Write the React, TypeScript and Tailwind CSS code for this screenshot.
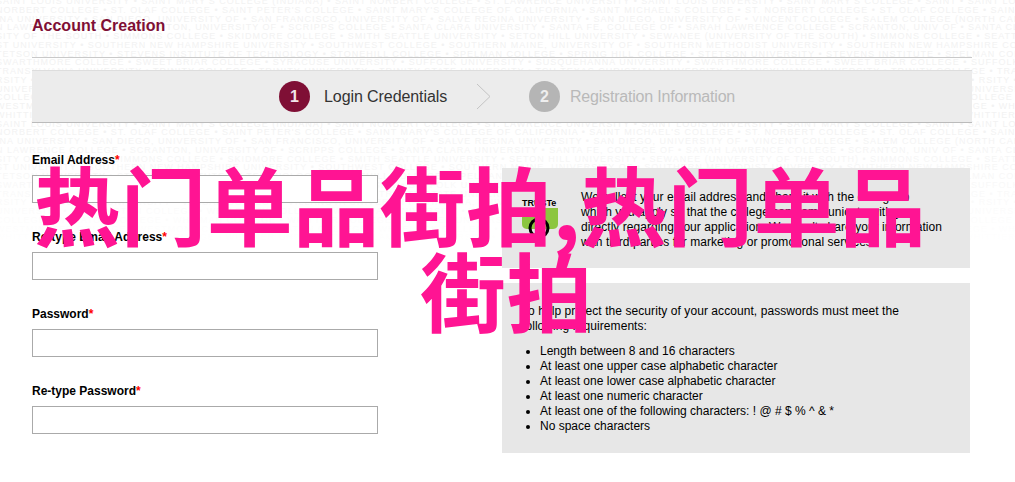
const schoolLines = [
  "SAINT LOUIS UNIVERSITY • SAINT MARY'S COLLEGE (INDIANA) • SAINT NORBERT COLLEGE • ST. LAWRENCE UNIVERSITY • SAINT LOUIS UNIVERSITY • SAINT MARY'S COLLEGE • SAINT",
  "NORBERT COLLEGE • ST. OLAF COLLEGE • SAINT PETER'S COLLEGE • SAINT MARY'S COLLEGE OF CALIFORNIA • SAINT MICHAEL'S COLLEGE • ST. NORBERT COLLEGE • ST. OLAF COLLEGE • SAINT MICHAEL'S",
  "INA UNIVERSITY • SAN DIEGO, UNIVERSITY OF • SAN FRANCISCO, UNIVERSITY OF • SALVE REGINA UNIVERSITY • SAN DIEGO, UNIVERSITY OF • VINCENT COLLEGE • SALEM COLLEGE (NORTH CAROLINA)",
  "N LAWRENCE COLLEGE • SCRANTON, UNIVERSITY OF • SCRIPPS COLLEGE • SANTA CLARA UNIVERSITY • SANTA FE, COLLEGE OF • SARAH LAWRENCE COLLEGE • SCRANTON, UNIV OF • SANTA CLARA",
  "SITY OF THE SOUTH • SIMMONS COLLEGE • SKIDMORE COLLEGE • SMITH SEATTLE UNIVERSITY • SETON HILL UNIVERSITY • SEWANEE (UNIVERSITY OF THE SOUTH) • SIMMONS COLLEGE • SEATTLE",
  "ST UNIVERSITY • SOUTHERN NEW HAMPSHIRE UNIVERSITY • SOUTHWEST COLLEGE • SOUTHERN MAINE, UNIVERSITY OF • SOUTHERN METHODIST UNIVERSITY • SOUTHERN NEW HAMPSHIRE COLLEGE",
  "TETSON UNIVERSITY • STEVENS INSTITUTE OF TECHNOLOGY • STONEHILL COLLEGE • SPELMAN COLLEGE • SPRING HILL COLLEGE • STETSON UNIVERSITY • STEVENS INSTITUTE • SPELMAN COLLEGE",
  "SWARTHMORE COLLEGE • SWEET BRIAR COLLEGE • SYRACUSE UNIVERSITY • SUFFOLK UNIVERSITY • SUSQUEHANNA UNIVERSITY • SWARTHMORE COLLEGE • SWEET BRIAR COLLEGE • SUFFOLK UNIVERSITY",
  "TRANSYLVANIA UNIVERSITY • TRINITY COLLEGE • TRINITY UNIVERSITY • TRINITY STATE UNIVERSITY • TCU TEXAS CHRISTIAN UNIVERSITY • TRANSYLVANIA UNIVERSITY • TRINITY COLLEGE",
  "RSITY • VANDERBILT UNIVERSITY • VASSAR COLLEGE • VILLANOVA UNIVERSITY • VIRGINIA, UNIVERSITY OF • WABASH COLLEGE • WAKE FOREST UNIVERSITY • VANDERBILT UNIVERSITY",
  "UNIVERSITY • WASHINGTON COLLEGE • WELLESLEY COLLEGE • WESLEYAN UNIVERSITY • WEST VIRGINIA UNIVERSITY • WESTERN NEW ENGLAND COLLEGE • WESTMINSTER COLLEGE",
  "COLLEGE • WHEATON COLLEGE • WHITMAN COLLEGE • WHITTIER COLLEGE • WIDENER UNIVERSITY • WILLAMETTE UNIVERSITY • WILLIAMS COLLEGE • WOFFORD COLLEGE • WHITMAN COLLEGE",
  "WESTMINSTER COLLEGE • WESTMONT COLLEGE • WHEATON COLLEGE • WHEELOCK COLLEGE • WHITMAN COLLEGE • WESTMONT COLLEGE • WESTMINSTER COLLEGE • WHEATON COLLEGE • WHEELOCK",
  "WHITTIER COLLEGE • WHITMAN COLLEGE • WIDENER UNIVERSITY • WILLAMETTE UNIVERSITY • WASHINGTON AND JEFFERSON COLLEGE • WHEELOCK COLLEGE • WHITMAN COLLEGE • WHITTIER COLLEGE",
];

const fields = ["Email Address", "Re-type Email Address", "Password", "Re-type Password"];

const rules = [
  "Length between 8 and 16 characters",
  "At least one upper case alphabetic character",
  "At least one lower case alphabetic character",
  "At least one numeric character",
  "At least one of the following characters: ! @ # $ % ^ & *",
  "No space characters",
];

function SchoolPattern() {
  const lines = [...schoolLines, ...schoolLines.slice(0, 14)];
  return (
    <div className="pointer-events-none absolute inset-x-0 top-0 h-[245px] overflow-hidden">
      <div className="-ml-1 -mt-[3px] text-[9px] leading-[8.75px] tracking-[1px] text-[#f2f2f2]">
        {lines.map((line, i) => (
          <div key={i} className="whitespace-nowrap">
            {line} • {line}
          </div>
        ))}
      </div>
      <div className="absolute inset-x-0 bottom-0 h-[120px] bg-gradient-to-b from-transparent to-white" />
    </div>
  );
}

function TrustLogo() {
  return (
    <div className="mt-[8px] w-[37px] shrink-0">
      <div className="h-[10px] text-[9px] font-bold leading-[10px] text-black">TRUSTe</div>
      <svg width="37" height="32" viewBox="0 0 37 32" className="block overflow-visible">
        <path d="M0 0H36V16C36 20 33 21 30 21H6C3 21 0 20 0 16Z" fill="#8cc63f" />
        <circle cx="17" cy="20" r="9" fill="none" stroke="#000" strokeWidth="3" />
        <circle cx="17" cy="20" r="3" fill="#000" />
      </svg>
    </div>
  );
}

export default function App() {
  return (
    <div className="relative h-[482px] w-[1015px] overflow-hidden bg-white font-['Liberation_Sans',Arial,sans-serif] text-[12px] leading-[15px] text-black">
      <SchoolPattern />

      <div className="relative w-[972px] pl-8">
        <div className="h-[58px] border-b border-[#c9c9c9] pt-[16px]">
          <h1 className="text-[16px] font-bold leading-[20px] text-[#7f0f35]">Account Creation</h1>
        </div>

        <div className="mt-3 flex h-[53px] items-center border-t border-b border-t-[#dddddd] border-b-[#bbbbbb] bg-[#ececec] pl-[247px]">
          <div className="flex h-[31px] w-[31px] items-center justify-center rounded-full bg-[#7f0f35] text-[16px] font-bold text-[#f2e6ea]">
            1
          </div>
          <span className="ml-[14px] w-[152px] text-[16px] tracking-[-0.08px] text-[#333333]">Login Credentials</span>
          <svg width="16" height="27" viewBox="0 0 16 27" fill="none" stroke="#c4c4c4" strokeWidth="1">
            <path d="M1 1L14 13.5L1 26" />
          </svg>
          <div className="ml-[37px] flex h-[31px] w-[31px] items-center justify-center rounded-full bg-[#b5b5b5] text-[16px] font-bold text-[#eeeeee]">
            2
          </div>
          <span className="ml-[10px] text-[16px] tracking-[-0.2px] text-[#b9b9b9]">Registration Information</span>
        </div>

        <div className="mt-[29px] flex">
          <form className="flex w-[346px] flex-col gap-[26px]">
            {fields.map((field) => (
              <div key={field}>
                <label className="block h-[23px] pt-[1px] font-bold">
                  {field}
                  <span className="text-[#ff0000]">*</span>
                </label>
                <input type="text" className="block h-[28px] w-full border border-[#aaaaaa] bg-white" />
              </div>
            ))}
          </form>

          <div className="ml-[124px] mt-[16px] w-[468px] shrink-0">
            <div className="flex h-[100px] bg-[#e7e7e7] pl-[20px] pt-[22px]">
              <TrustLogo />
              <p className="ml-[22px] w-[372px] tracking-[0.05px]">
                We collect your email address and share it with the college to
                <br />
                which you apply so that the college can communicate with you directly regarding your application. We won't share your information with third parties for marketing or promotional services.
              </p>
            </div>

            <div className="mt-[15px] h-[170px] bg-[#e7e7e7] pl-[20px] pt-[21px]">
              <p className="w-[385px] tracking-[0.07px]">
                To help protect the security of your account, passwords must meet the following requirements:
              </p>
              <ul className="mt-[10px] list-disc pl-[18px]">
                {rules.map((rule) => (
                  <li key={rule}>{rule}</li>
                ))}
              </ul>
            </div>
          </div>
        </div>
      </div>

      <div className="pointer-events-none absolute inset-x-0 top-[160px] font-['Noto_Sans_CJK_SC',sans-serif] text-[86px] font-bold leading-[86px] tracking-[0.4px] text-[#ff1493]">
        <div className="whitespace-nowrap pl-[34px]">热门单品街拍,热门单品</div>
        <div className="whitespace-nowrap pl-[420px]">街拍</div>
      </div>
    </div>
  );
}
